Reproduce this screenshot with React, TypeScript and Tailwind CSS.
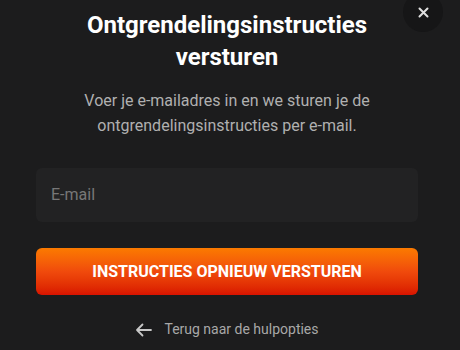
import React from "react";

export default function App() {
  return (
    <div
      className="relative w-[460px] h-[350px] overflow-hidden bg-[#1c1c1d]"
      style={{ fontFamily: "Roboto, 'Liberation Sans', sans-serif" }}
    >
      <button className="absolute left-[403px] top-[-8px] w-[40px] h-[40px] rounded-full bg-[#161617] flex items-center justify-center">
        <svg width="11" height="11" viewBox="0 0 11 11">
          <path d="M1.5 1.5 L9.5 9.5 M9.5 1.5 L1.5 9.5" stroke="#e0e0e0" strokeWidth="2" strokeLinecap="round" />
        </svg>
      </button>
      <div className="ml-[36px] w-[382px] flex flex-col items-center pt-[9px]">
        <h1 className="text-white font-bold text-[24px] leading-[32px] text-center">
          Ontgrendelingsinstructies
          <br />
          versturen
        </h1>
        <p className="mt-[15px] text-[#b0b0b0] text-[16px] leading-[25px] text-center">
          Voer je e-mailadres in en we sturen je de
          <br />
          ontgrendelingsinstructies per e-mail.
        </p>
        <div className="mt-[30px] w-full h-[54px] rounded-[6px] bg-[#222223] flex items-center px-[15px]">
          <span className="text-[#777] text-[16px]">E-mail</span>
        </div>
        <button className="mt-[26px] w-full h-[47px] rounded-[6px] bg-gradient-to-b from-[#fb7a00] via-[#f04a0c] to-[#d81200] text-white font-bold text-[16px] flex items-center justify-center">
          INSTRUCTIES OPNIEUW VERSTUREN
        </button>
        <div className="mt-[24px] flex items-center gap-[12px] text-[#a8a8a8] text-[14px]">
          <svg width="17" height="14" viewBox="0 0 17 14">
            <path d="M16 7 H2 M7.5 1.5 L2 7 L7.5 12.5" stroke="#c8c8c8" strokeWidth="1.8" fill="none" strokeLinecap="round" strokeLinejoin="round" />
          </svg>
          <span>Terug naar de hulpopties</span>
        </div>
      </div>
    </div>
  );
}
